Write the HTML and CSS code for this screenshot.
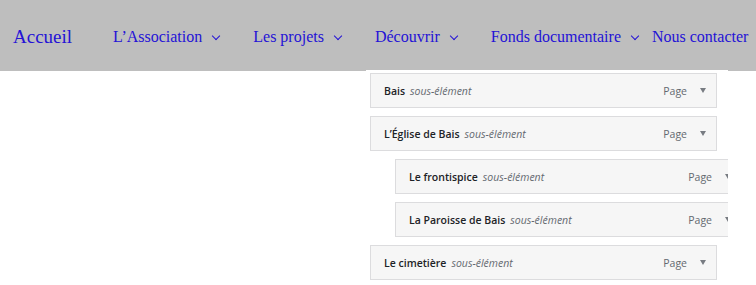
FILE: index.html
```html
<!DOCTYPE html>
<html lang="fr">
<head>
    <meta charset="UTF-8">
    <meta name="viewport" content="width=device-width, initial-scale=1.0">
    <title>Menu - Bais</title>
    <link rel="stylesheet" href="styles.css">
</head>
<body>
    <header class="site-header">
        <nav class="main-nav">
            <a class="nav-home" href="#">Accueil</a>
            <a class="nav-item" href="#">L’Association <span class="chevron"></span></a>
            <a class="nav-item" href="#">Les projets <span class="chevron"></span></a>
            <a class="nav-item" href="#">Découvrir <span class="chevron"></span></a>
            <a class="nav-item" href="#">Fonds documentaire <span class="chevron"></span></a>
            <a class="nav-item nav-last" href="#">Nous contacter</a>
        </nav>
    </header>

    <!-- sous-menu "Découvrir" -->
    <div class="submenu">
        <div class="menu-row">
            <span class="row-title">Bais</span>
            <span class="row-sub">sous-élément</span>
            <span class="row-type">Page</span>
            <span class="row-arrow"></span>
        </div>
        <div class="menu-row">
            <span class="row-title">L’Église de Bais</span>
            <span class="row-sub">sous-élément</span>
            <span class="row-type">Page</span>
            <span class="row-arrow"></span>
        </div>
        <div class="menu-row nested">
            <span class="row-title">Le frontispice</span>
            <span class="row-sub">sous-élément</span>
            <span class="row-type">Page</span>
            <span class="row-arrow"></span>
        </div>
        <div class="menu-row nested">
            <span class="row-title">La Paroisse de Bais</span>
            <span class="row-sub">sous-élément</span>
            <span class="row-type">Page</span>
            <span class="row-arrow"></span>
        </div>
        <div class="menu-row">
            <span class="row-title">Le cimetière</span>
            <span class="row-sub">sous-élément</span>
            <span class="row-type">Page</span>
            <span class="row-arrow"></span>
        </div>
    </div>
</body>
</html>
```

FILE: styles.css
```css
/* Styles */
body {
    margin: 0;
    background: #fff;
    font-family: "Liberation Serif", "Times New Roman", serif;
}

.site-header {
    height: 71px;
    background-color: #bebebe;
}

.main-nav {
    display: flex;
    align-items: center;
    height: 71px;
    box-sizing: border-box;
    padding: 3px 0 0 13px;
    gap: 34px;
    white-space: nowrap;
    overflow: hidden;
}

.main-nav a {
    color: #2412d6;
    text-decoration: none;
    font-size: 16px;
}

.main-nav .nav-home {
    font-size: 19px;
    margin-right: 7px;
}

.nav-item {
    display: flex;
    align-items: center;
}

.nav-last {
    margin-left: -20px;
}

.chevron {
    display: inline-block;
    width: 5px;
    height: 5px;
    margin-left: 11px;
    margin-top: -3px;
    border-right: 1.5px solid #2412d6;
    border-bottom: 1.5px solid #2412d6;
    transform: rotate(45deg);
}

/* sous-menu */
.submenu {
    margin: -1px 0 0 366px;
    width: 362px;
    height: 215px;
    background: #fff;
    overflow: hidden;
    padding: 3px 0 0 4px;
    box-sizing: border-box;
    display: flex;
    flex-direction: column;
    gap: 8px;
    font-family: "Open Sans", "Noto Sans", sans-serif;
    font-size: 10.5px;
}

.menu-row {
    display: flex;
    align-items: center;
    flex-shrink: 0;
    width: 347px;
    height: 35px;
    box-sizing: border-box;
    padding: 0 10px 0 13px;
    background: #f6f6f6;
    border: 1px solid #dcdcde;
    white-space: nowrap;
}

.menu-row.nested {
    margin-left: 25px;
}

.row-title {
    font-weight: 600;
    color: #1d2327;
}

.row-sub {
    margin-left: 5px;
    font-style: italic;
    color: #646970;
}

.row-type {
    margin-left: auto;
    color: #646970;
}

.row-arrow {
    width: 0;
    height: 0;
    margin-left: 13px;
    border-left: 3.5px solid transparent;
    border-right: 3.5px solid transparent;
    border-top: 5px solid #787c82;
}
```
